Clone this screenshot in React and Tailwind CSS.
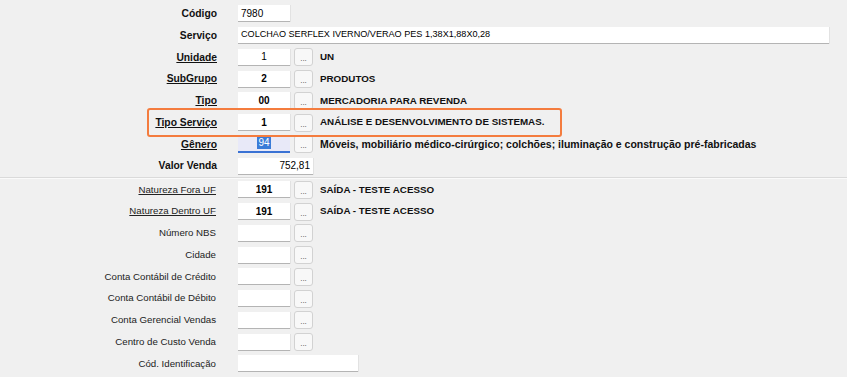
import React from "react";

const Btn = () => (
  <div className="ml-[4px] w-[19px] h-[18px] rounded-[3px] border border-[#d2d2d2] bg-[#f8f8f8] flex items-end justify-center pb-[2px] text-[8px] leading-none text-[#444] shrink-0">
    ...
  </div>
);

const Field = ({ w = "w-[52px]", children, align = "text-center", bold = false, size = "text-[10px]" }) => (
  <div
    className={`${w} h-[17px] bg-white border-b border-[#b4b4b4] shadow-[1px_0_0_#e2e2e2] flex items-center px-[3px] ${size} text-black shrink-0 ${align} ${bold ? "font-bold" : ""}`}
  >
    <span className="w-full whitespace-nowrap overflow-hidden">{children}</span>
  </div>
);

const TopLabel = ({ children, u = false }) => (
  <div className="w-[217px] text-right text-[10.3px] font-bold text-[#111] shrink-0">
    <span className={u ? "underline underline-offset-[1px]" : ""}>{children}</span>
  </div>
);

const LowLabel = ({ children, u = false }) => (
  <div className="w-[216px] text-right text-[9.7px] text-[#222] shrink-0">
    <span className={u ? "underline underline-offset-[1px]" : ""}>{children}</span>
  </div>
);

const Row = ({ children }) => <div className="flex items-center h-[21.75px]">{children}</div>;

const Desc = ({ children, size = "text-[9.8px]" }) => (
  <div className={`ml-[7px] ${size} font-bold text-[#111] whitespace-nowrap`}>{children}</div>
);

export default function App() {
  return (
    <div className="relative w-[847px] h-[377px] overflow-hidden bg-[#f0f0f0] font-['Liberation_Sans',Arial,sans-serif]">
      <div className="pt-[3px]">
        <Row>
          <TopLabel>Código</TopLabel>
          <div className="ml-[21px]" />
          <Field align="text-left">7980</Field>
        </Row>
        <Row>
          <TopLabel>Serviço</TopLabel>
          <div className="ml-[21px]" />
          <Field w="w-[591px]" align="text-left" size="text-[9.1px]">COLCHAO SERFLEX IVERNO/VERAO PES 1,38X1,88X0,28</Field>
        </Row>
        <Row>
          <TopLabel u>Unidade</TopLabel>
          <div className="ml-[21px]" />
          <Field>1</Field>
          <Btn />
          <Desc>UN</Desc>
        </Row>
        <Row>
          <TopLabel u>SubGrupo</TopLabel>
          <div className="ml-[21px]" />
          <Field bold>2</Field>
          <Btn />
          <Desc>PRODUTOS</Desc>
        </Row>
        <Row>
          <TopLabel u>Tipo</TopLabel>
          <div className="ml-[21px]" />
          <Field bold>00</Field>
          <Btn />
          <Desc>MERCADORIA PARA REVENDA</Desc>
        </Row>
        <Row>
          <TopLabel u>Tipo Serviço</TopLabel>
          <div className="ml-[21px]" />
          <Field bold>1</Field>
          <Btn />
          <Desc>ANÁLISE E DESENVOLVIMENTO DE SISTEMAS.</Desc>
        </Row>
        <Row>
          <TopLabel u>Gênero</TopLabel>
          <div className="ml-[21px]" />
          <div className="w-[52px] h-[17px] bg-[#e8e9f8] border-b-2 border-[#3a72d4] flex items-center justify-center text-[10px] shrink-0">
            <span className="bg-[#3a7bd8] text-white px-[1px] leading-[12px]">94</span>
          </div>
          <Btn />
          <Desc size="text-[10.5px]">Móveis, mobiliário médico-cirúrgico; colchões; iluminação e construção pré-fabricadas</Desc>
        </Row>
        <Row>
          <TopLabel>Valor Venda</TopLabel>
          <div className="ml-[21px]" />
          <Field w="w-[75px]" align="text-right">752,81</Field>
        </Row>
      </div>

      <div className="h-[1px] bg-[#dadada]" />
      <div className="h-[1px] bg-[#fafafa]" />

      <div>
        <Row>
          <LowLabel u>Natureza Fora UF</LowLabel>
          <div className="ml-[22px]" />
          <Field bold>191</Field>
          <Btn />
          <Desc>SAÍDA - TESTE ACESSO</Desc>
        </Row>
        <Row>
          <LowLabel u>Natureza Dentro UF</LowLabel>
          <div className="ml-[22px]" />
          <Field bold>191</Field>
          <Btn />
          <Desc>SAÍDA - TESTE ACESSO</Desc>
        </Row>
        <Row>
          <LowLabel>Número NBS</LowLabel>
          <div className="ml-[22px]" />
          <Field></Field>
          <Btn />
        </Row>
        <Row>
          <LowLabel>Cidade</LowLabel>
          <div className="ml-[22px]" />
          <Field></Field>
          <Btn />
        </Row>
        <Row>
          <LowLabel>Conta Contábil de Crédito</LowLabel>
          <div className="ml-[22px]" />
          <Field></Field>
          <Btn />
        </Row>
        <Row>
          <LowLabel>Conta Contábil de Débito</LowLabel>
          <div className="ml-[22px]" />
          <Field></Field>
          <Btn />
        </Row>
        <Row>
          <LowLabel>Conta Gerencial Vendas</LowLabel>
          <div className="ml-[22px]" />
          <Field></Field>
          <Btn />
        </Row>
        <Row>
          <LowLabel>Centro de Custo Venda</LowLabel>
          <div className="ml-[22px]" />
          <Field></Field>
          <Btn />
        </Row>
        <Row>
          <LowLabel>Cód. Identificação</LowLabel>
          <div className="ml-[22px]" />
          <Field w="w-[120px]"></Field>
        </Row>
        <Row>
          <LowLabel></LowLabel>
          <div className="ml-[22px]" />
          <Field w="w-[75px]"></Field>
        </Row>
      </div>

      <div className="absolute left-[147px] top-[108px] w-[415px] h-[29px] border-2 border-[#f47c3e] rounded-[3px] pointer-events-none" />
    </div>
  );
}
